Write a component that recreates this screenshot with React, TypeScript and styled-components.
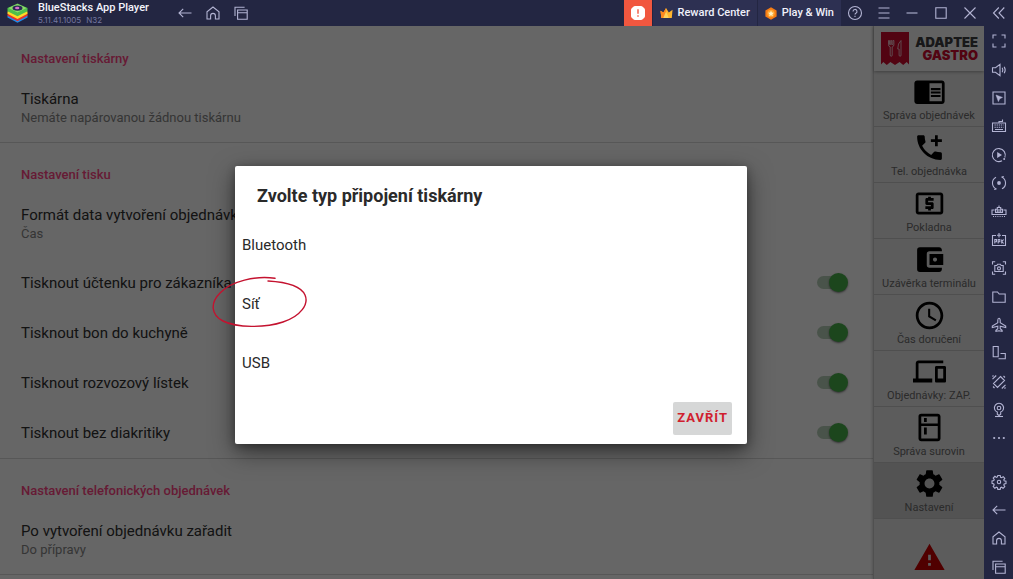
import React from 'react';
import styled, { createGlobalStyle } from 'styled-components';
import {
  MdAccessTime,
  MdAccountBalanceWallet,
  MdAddIcCall,
  MdChromeReaderMode,
  MdDevices,
  MdLocalAtm,
  MdOutlineKitchen,
  MdSettings,
  MdWarning,
} from 'react-icons/md';

const GlobalStyle = createGlobalStyle`
  *, *::before, *::after { box-sizing: border-box; }
  body { margin: 0; font-family: Roboto, "Liberation Sans", sans-serif; }
  button { font: inherit; color: inherit; border: 0; padding: 0; background: none; cursor: pointer; }
  h1, h2, p, ul { margin: 0; padding: 0; list-style: none; }
  svg { display: block; }
`;

const Player = styled.div`
  display: flex;
  flex-direction: column;
  height: 100vh;
  overflow: hidden;
  background: #232642;
`;

/* ---------- title bar ---------- */

const TitleBar = styled.header`
  display: flex;
  align-items: stretch;
  flex: none;
  height: 26px;
  color: #b3b4d3;
`;

const Brand = styled.div`
  display: flex;
  align-items: center;
  gap: 10px;
  padding-left: 7px;
`;

const BrandName = styled.h1`
  font-size: 11px;
  line-height: 14px;
  font-weight: 500;
  color: #f4f4fb;
  white-space: nowrap;
`;

const BrandVersion = styled.p`
  display: flex;
  gap: 5px;
  font-family: Inter, Roboto, sans-serif;
  font-size: 8px;
  line-height: 10px;
  color: #7578a0;
`;

const NavButtons = styled.nav`
  display: flex;
  flex: 1;
  padding-left: 22px;
`;

const NavButton = styled.button`
  display: grid;
  place-items: center;
  width: 28px;
`;

const AlertButton = styled.button`
  display: grid;
  place-items: center;
  width: 28px;
  background: #f1573f;
`;

const PromoButton = styled.button`
  display: flex;
  align-items: center;
  gap: 5px;
  margin-left: 1px;
  padding: 0 7px;
  background: #2d3052;
  color: #f0f0fa;
  font-size: 11px;
  line-height: 14px;
  font-weight: 500;
  white-space: nowrap;
`;

const WindowControls = styled.div`
  display: flex;
  flex: none;
  width: 143px;
`;

const WindowButton = styled.button`
  display: grid;
  place-items: center;
  flex: 1;
`;

const CollapseButton = styled.button`
  display: grid;
  place-items: center;
  flex: none;
  width: 29px;
`;

/* ---------- body ---------- */

const Body = styled.div`
  display: flex;
  flex: 1;
  min-height: 0;
`;

const AppArea = styled.div`
  position: relative;
  display: flex;
  flex: 1;
  min-width: 0;
  overflow: hidden;
  background: #fff;
`;

const Settings = styled.main`
  flex: 1;
  min-width: 0;
  padding-top: 1px;
  overflow: hidden;
  background: #fefefe;
`;

const Section = styled.section`
  border-bottom: 1px solid #dadada;
`;

const SectionTitle = styled.h2`
  padding: 22px 21px 4px;
  font-size: 13px;
  line-height: 20px;
  font-weight: 500;
  color: #ff4484;
`;

const Preference = styled.div`
  padding: 16px 21px;
`;

const PreferenceTitle = styled.p`
  font-size: 15px;
  line-height: 20px;
  color: #303030;
`;

const PreferenceSummary = styled.p`
  font-size: 13px;
  line-height: 17px;
  color: #868686;
`;

const SwitchRow = styled.label`
  display: flex;
  align-items: center;
  justify-content: space-between;
  height: 50px;
  padding: 0 25px 0 21px;
  font-size: 15px;
  line-height: 20px;
  color: #303030;
`;

const Switch = styled.input`
  appearance: none;
  display: grid;
  align-items: center;
  width: 31px;
  height: 20px;
  margin: 0 0 2px;

  &::before,
  &::after {
    content: '';
    grid-area: 1 / 1;
  }
  &::before {
    width: 28px;
    height: 13px;
    border-radius: 7px;
    background: #b7cfb8;
  }
  &::after {
    justify-self: end;
    width: 19px;
    height: 19px;
    border-radius: 50%;
    background: #46b04a;
    box-shadow: 0 1px 2px rgba(0, 0, 0, 0.5);
  }
`;

/* ---------- app menu ---------- */

const Menu = styled.aside`
  display: flex;
  flex-direction: column;
  flex: none;
  width: 111px;
  border-left: 1px solid #c8c8c8;
  background: #e6e6e6;
  box-shadow: 0 0 3px rgba(0, 0, 0, 0.3);
`;

const MenuLogo = styled.div`
  display: flex;
  align-items: center;
  justify-content: space-between;
  flex: none;
  height: 45px;
  padding: 0 6px 0 7px;
  background: #f6f6f6;
  box-shadow: 0 1px 3px rgba(0, 0, 0, 0.3);
`;

const LogoText = styled.div`
  display: flex;
  flex-direction: column;
  align-items: flex-end;
`;

const LogoWord = styled.span<{ $accent?: boolean }>`
  font-family: Inter, Roboto, sans-serif;
  font-size: 13px;
  line-height: 13px;
  font-weight: 900;
  color: ${(p) => (p.$accent ? '#cc0a2f' : '#3c3c40')};
`;

const MenuItem = styled.button<{ $active?: boolean }>`
  display: flex;
  flex-direction: column;
  align-items: center;
  flex: none;
  height: 56px;
  padding-top: 4px;
  border-bottom: 1px solid #c6c6c6;
  background: ${(p) => (p.$active ? '#d0d0d0' : 'transparent')};
  color: #000;
`;

const MenuLabel = styled.span`
  font-size: 11px;
  line-height: 16px;
  color: #6c6c6c;
  white-space: nowrap;
`;

const MenuAlert = styled.button`
  display: grid;
  justify-content: center;
  flex: none;
  padding-top: 22px;
  color: #c80000;
`;

/* ---------- dialog ---------- */

const Backdrop = styled.div`
  position: absolute;
  inset: 0;
  display: flex;
  align-items: center;
  justify-content: center;
  padding: 4px 2px 0 0;
  background: rgba(0, 0, 0, 0.6);
`;

const Dialog = styled.div`
  width: 512px;
  max-width: 90%;
  border-radius: 2px;
  background: #fff;
  box-shadow: 0 8px 24px rgba(0, 0, 0, 0.5), 0 2px 8px rgba(0, 0, 0, 0.3);
`;

const DialogTitle = styled.h2`
  padding: 18px 22px 8px;
  font-size: 18px;
  line-height: 24px;
  font-weight: 700;
  color: #2a2a2a;
`;

const Option = styled.button`
  position: relative;
  display: flex;
  align-items: center;
  width: 100%;
  height: 59px;
  padding: 0 7px;
  font-size: 15px;
  line-height: 20px;
  color: #2a2a2a;
`;

const HandMark = styled.svg`
  position: absolute;
  left: -24px;
  top: 0;
  overflow: visible;
`;

const DialogFooter = styled.div`
  display: flex;
  justify-content: flex-end;
  padding: 9px 15px;
`;

const CloseButton = styled.button`
  height: 33px;
  padding: 0 4px;
  border-radius: 2px;
  background: #d6d7d7;
  font-size: 13px;
  line-height: 16px;
  font-weight: 700;
  letter-spacing: 1px;
  color: #d0202e;
`;

/* ---------- tool rail ---------- */

const Rail = styled.aside`
  display: flex;
  flex-direction: column;
  gap: 15px;
  flex: none;
  width: 29px;
  margin-bottom: -2px;
  padding-top: 1px;
  color: #b3b4d3;
`;

const RailGroup = styled.div<{ $count: number }>`
  display: flex;
  flex-direction: column;
  flex: ${(p) => p.$count} 1 0;
`;

const RailButton = styled.button`
  display: grid;
  place-items: center;
  flex: 1;
  min-height: 0;
`;

/* ---------- icons ---------- */

const Line = ({ children, size = 16 }: { children: React.ReactNode; size?: number }) => (
  <svg
    width={size}
    height={size}
    viewBox="0 0 16 16"
    fill="none"
    stroke="currentColor"
    strokeWidth="1.1"
    aria-hidden="true"
  >
    {children}
  </svg>
);

const BackIcon = () => (
  <Line><path d="M14.5 8H2M6.2 3.8L2 8l4.2 4.2" /></Line>
);
const HomeIcon = () => (
  <Line><path d="M2 14V6.800L8 2l6 4.800V14h-3.600v-3.200a2.400 2.400 0 0 0-4.800 0V14z" /></Line>
);
const RecentsIcon = () => (
  <Line><path d="M4.600 5h9.600v9.200H4.600zM4.600 7.800h9.600M2 11V2.200h9.600" /></Line>
);

const rail: Array<{ name: string; icon: React.ReactNode }> = [
  { name: 'Fullscreen', icon: <path d="M2 5.500V2h3.500M10.500 2H14v3.500M14 10.500V14h-3.500M5.500 14H2v-3.500" /> },
  { name: 'Volume', icon: <path d="M1.500 5.800h3L9 2.300v11.400l-4.500-3.500h-3zM11.200 5.800q1.300 2.200 0 4.400M13.200 4.800q2 3.200 0 6.400" /> },
  {
    name: 'Lock cursor',
    icon: (
      <>
        <path d="M2 2h12v12H2z" />
        <path d="M5 5l6.500 2.400-2.800 1.300-1.300 2.900z" fill="currentColor" stroke="currentColor" strokeWidth="0.500" />
      </>
    ),
  },
  {
    name: 'Game controls',
    icon: (
      <>
        <path d="M1.500 5h13v8.500h-13zM8 5V3.500h3.500V1.500M4 11.500h8" />
        <path d="M3.500 7h9M3.500 9.200h9" strokeDasharray="1.300 0.800" />
      </>
    ),
  },
  {
    name: 'Sync operations',
    icon: (
      <>
        <path d="M11 13.700A6.500 6.500 0 1 1 13.800 10.500" />
        <path d="M6.200 5l4.800 3-4.800 3z" fill="currentColor" stroke="none" />
        <circle cx="13.200" cy="12" r="1" fill="currentColor" stroke="none" />
      </>
    ),
  },
  {
    name: 'Macro recorder',
    icon: (
      <>
        <path d="M5.500 14A6.500 6.500 0 0 1 5 2.200M10.500 2A6.500 6.500 0 0 1 11 13.800M5.500 14l-2.300.5M10.500 2l2.300-.5" />
        <circle cx="8" cy="8" r="1.900" fill="currentColor" stroke="none" />
      </>
    ),
  },
  {
    name: 'Memory trim',
    icon: (
      <>
        <path d="M3.500 7H1v4.500h14V7h-2.500M4.500 9.500V6.300H6M11.500 9.500V6.300H10M6.300 9.500V4.500h3.400v5M8 4.500V2.500M4 9.500h8M8 6v3" />
        <path d="M2 13.500h12" strokeDasharray="1 1.200" />
      </>
    ),
  },
  {
    name: 'Install app',
    icon: (
      <path d="M5 3.500H1.500v10h13v-10H11M8 1v4.500M6 3.300h4M3.800 11.500v-4h1.700v2.200H3.800M7.200 11.500v-4h1.600v2.200H7.200M10.700 7.500v4M12.700 7.500l-1.800 2 1.800 2" />
    ),
  },
  {
    name: 'Screenshot',
    icon: (
      <>
        <path d="M1.500 4.500V1.800h2.700M11.800 1.800h2.700v2.700M14.500 11.500v2.700h-2.700M4.200 14.200H1.500v-2.700M3.800 5.500h2l.8-1.200h2.800l.8 1.200h2v6H3.800z" />
        <circle cx="8" cy="8.400" r="1.500" />
      </>
    ),
  },
  { name: 'Media folder', icon: <path d="M1.800 3h4.700l1.700 2h6v8.200H1.800z" /> },
  {
    name: 'Real-time translation',
    icon: (
      <path d="M8 1.300c-.8 0-1.200 1-1.200 2v2.500L1.300 9v1.500l5.500-1.300v2.600l-1.900 1.400v1.200L8 13.700l3.100.7v-1.200l-1.900-1.400V9.200l5.500 1.300V9L9.200 5.800V3.300c0-1-.4-2-1.200-2z" />
    ),
  },
  { name: 'Rotate', icon: <path d="M2.200 1.500h5v10.300h-5zM9.500 8.500h4.800v5.300H7.500" /> },
  {
    name: 'Shake',
    icon: <path d="M9.500 2.500l4 4-7 7-4-4zM1.500 5.200l3.700-3.700M1.500 2.500l1-1M14.500 10.800l-3.700 3.700M14.500 13.500l-1 1M12.500 2l1.500 1.500M2 12.500L3.500 14" />,
  },
  {
    name: 'Location',
    icon: (
      <>
        <path d="M6.300 12.200v-2.100a4.600 4.600 0 1 1 3.400 0v2.100L8 13.500z" />
        <circle cx="8" cy="6" r="1.800" />
        <path d="M4 14.500h8" />
      </>
    ),
  },
  {
    name: 'More',
    icon: (
      <g fill="currentColor" stroke="none">
        <circle cx="3.200" cy="8" r="1.100" />
        <circle cx="8" cy="8" r="1.100" />
        <circle cx="12.800" cy="8" r="1.100" />
      </g>
    ),
  },
];

const GearLine = () => (
  <Line>
    <path d="M6.800 1.500h2.400l.4 1.800 1 .4 1.600-1 1.600 1.700-1 1.500.4 1 1.800.4v2.300l-1.800.4-.4 1 1 1.600-1.700 1.600-1.500-1-1 .4-.4 1.800H6.800l-.4-1.800-1-.4-1.600 1-1.600-1.700 1-1.500-.4-1L1 9.300V6.900l1.800-.4.4-1-1-1.500 1.700-1.700 1.500 1 1-.4z" />
    <circle cx="8" cy="8" r="1.700" />
  </Line>
);

const StackLogo = () => (
  <svg width="21" height="20" viewBox="0 0 21 20" aria-hidden="true">
    <path d="M.5 12.500L10.500 8l10 4.500v2l-10 5.200-10-5.200z" fill="#1c8ff0" />
    <path d="M.5 10.500L10.500 6l10 4.500v2.300l-10 5.400-10-5.400z" fill="#e8342e" />
    <path d="M.5 8.500L10.500 4l10 4.500v2.200l-10 5.200-10-5.200z" fill="#ffd928" />
    <path d="M.5 5L10.500.5l10 4.500v3.200l-10 5.100-10-5.100z" fill="#4fbf4a" />
    <path d="M1.500 5L10.500 1l9 4-9 4.500z" fill="#8fdc6c" />
    <ellipse cx="10.500" cy="5.100" rx="5" ry="2.700" fill="#2a2b55" />
    <ellipse cx="10.200" cy="5" rx="2.200" ry="1.300" fill="#d86fd0" />
  </svg>
);

const menu = [
  { label: 'Správa objednávek', Icon: MdChromeReaderMode },
  { label: 'Tel. objednávka', Icon: MdAddIcCall },
  { label: 'Pokladna', Icon: MdLocalAtm },
  { label: 'Uzávěrka terminálu', Icon: MdAccountBalanceWallet },
  { label: 'Čas doručení', Icon: MdAccessTime },
  { label: 'Objednávky: ZAP.', Icon: MdDevices },
  { label: 'Správa surovin', Icon: MdOutlineKitchen },
  { label: 'Nastavení', Icon: MdSettings, active: true },
];

const switches = [
  'Tisknout účtenku pro zákazníka',
  'Tisknout bon do kuchyně',
  'Tisknout rozvozový lístek',
  'Tisknout bez diakritiky',
];

export default function App() {
  return (
    <Player>
      <GlobalStyle />
      <TitleBar>
        <Brand>
          <StackLogo />
          <div>
            <BrandName>BlueStacks App Player</BrandName>
            <BrandVersion>
              <span>5.11.41.1005</span>
              <span>N32</span>
            </BrandVersion>
          </div>
        </Brand>
        <NavButtons aria-label="Android">
          <NavButton aria-label="Back"><BackIcon /></NavButton>
          <NavButton aria-label="Home"><HomeIcon /></NavButton>
          <NavButton aria-label="Recent apps"><RecentsIcon /></NavButton>
        </NavButtons>
        <AlertButton aria-label="Alerts">
          <svg width="14" height="14" viewBox="0 0 14 14" aria-hidden="true">
            <path d="M4 0h6q1 0 1.700.7l1.600 1.600Q14 3 14 4v6q0 1-.7 1.700l-1.600 1.600Q11 14 10 14H4q-1 0-1.700-.7L.7 11.700Q0 11 0 10V4q0-1 .7-1.700L2.300.7Q3 0 4 0z" fill="#fff" />
            <path d="M7 3.300v4.500M7 9.200v1.500" stroke="#f1573f" strokeWidth="1.400" />
          </svg>
        </AlertButton>
        <PromoButton>
          <svg width="13" height="12" viewBox="0 0 14 12" aria-hidden="true">
            <path d="M.5 3.500l3.200 2L6.500.5l3 5 4-3-.8 9H1.500z" fill="#ffb52e" />
            <path d="M.5 3.500l3.200 2L6.500.5v11h-5z" fill="#ff8a1f" />
            <path d="M6.500 4.500l3 7h-6z" fill="#ffd45c" />
          </svg>
          Reward Center
        </PromoButton>
        <PromoButton>
          <svg width="12" height="13" viewBox="0 0 12 13" aria-hidden="true">
            <path d="M6 .3l5.600 3.100v6.200L6 12.700.4 9.600V3.400z" fill="#f57c14" />
            <circle cx="6" cy="6.500" r="3.700" fill="#ffa52e" />
            <path d="M6 3.600l.9 1.900 2 .3-1.500 1.400.4 2L6 8.200l-1.800 1 .4-2-1.500-1.400 2-.3z" fill="#fff1c4" />
          </svg>
          Play &amp; Win
        </PromoButton>
        <WindowControls>
          <WindowButton aria-label="Help">
            <Line>
              <circle cx="8" cy="8" r="6.500" />
              <path d="M6 6.400a2 2 0 1 1 2.900 1.800c-.7.400-.9.700-.9 1.300M8 10.700v1.200" />
            </Line>
          </WindowButton>
          <WindowButton aria-label="Menu">
            <Line><path d="M2.500 3h11M2.500 8h11M2.500 13h11" /></Line>
          </WindowButton>
          <WindowButton aria-label="Minimize">
            <Line><path d="M2.500 8h11" /></Line>
          </WindowButton>
          <WindowButton aria-label="Maximize">
            <Line><path d="M2.800 2.800h10.400v10.400H2.800z" /></Line>
          </WindowButton>
          <WindowButton aria-label="Close">
            <Line><path d="M2.500 2.500l11 11M13.500 2.500l-11 11" /></Line>
          </WindowButton>
        </WindowControls>
        <CollapseButton aria-label="Collapse toolbar">
          <Line><path d="M7.800 2.500L2.500 8l5.300 5.500M13.300 2.500L8 8l5.300 5.500" /></Line>
        </CollapseButton>
      </TitleBar>

      <Body>
        <AppArea>
          <Settings>
            <Section>
              <SectionTitle>Nastavení tiskárny</SectionTitle>
              <Preference>
                <PreferenceTitle>Tiskárna</PreferenceTitle>
                <PreferenceSummary>Nemáte napárovanou žádnou tiskárnu</PreferenceSummary>
              </Preference>
            </Section>
            <Section>
              <SectionTitle>Nastavení tisku</SectionTitle>
              <Preference>
                <PreferenceTitle>Formát data vytvoření objednávky</PreferenceTitle>
                <PreferenceSummary>Čas</PreferenceSummary>
              </Preference>
              {switches.map((label) => (
                <SwitchRow key={label}>
                  {label}
                  <Switch type="checkbox" defaultChecked />
                </SwitchRow>
              ))}
            </Section>
            <Section>
              <SectionTitle>Nastavení telefonických objednávek</SectionTitle>
              <Preference>
                <PreferenceTitle>Po vytvoření objednávku zařadit</PreferenceTitle>
                <PreferenceSummary>Do přípravy</PreferenceSummary>
              </Preference>
            </Section>
          </Settings>

          <Menu>
            <MenuLogo>
              <svg width="28" height="33" viewBox="0 0 28 33" aria-hidden="true">
                <path d="M0 0h28v32.500l-2.300-2.500-3.500 3-3.600-3-4.600 3-4.600-3-3.600 3-3.500-3L0 32.500z" fill="#cc0a2f" />
                <g fill="none" stroke="#f3c9d1" strokeWidth="0.900">
                  <path d="M7.500 8.500v4.300q0 1.700 1.700 2.100V23q0 1.300 1 1.300t1-1.300v-8.100q1.700-.4 1.700-2.100V8.500h-1v4h-1.200v-4h-1v4H8.500v-4z" />
                  <path d="M20 8.500q-3.300 2.700-3.300 8.500h1.400v6q0 1.300 1 1.300t.9-1.300z" />
                </g>
              </svg>
              <LogoText>
                <LogoWord>ADAPTEE</LogoWord>
                <LogoWord $accent>GASTRO</LogoWord>
              </LogoText>
            </MenuLogo>
            {menu.map(({ label, Icon, active }) => (
              <MenuItem key={label} $active={active}>
                <Icon size={33} />
                <MenuLabel>{label}</MenuLabel>
              </MenuItem>
            ))}
            <MenuAlert aria-label="Upozornění">
              <MdWarning size={33} />
            </MenuAlert>
          </Menu>

          <Backdrop>
            <Dialog role="dialog" aria-modal="true" aria-labelledby="dialog-title">
              <DialogTitle id="dialog-title">Zvolte typ připojení tiskárny</DialogTitle>
              <Option>Bluetooth</Option>
              <Option>
                Síť
                <HandMark width="98" height="56" viewBox="0 0 98 56" fill="none" stroke="#c4122f" strokeLinecap="round" aria-hidden="true">
                  <path d="M64 3.300C45 .5 20 6 9 18-1 28 0 40 12 46c14 7 42 7 60 1 18-6 26-18 22-27C90 11 74 7 57 6" strokeWidth="1.400" />
                </HandMark>
              </Option>
              <Option>USB</Option>
              <DialogFooter>
                <CloseButton>ZAVŘÍT</CloseButton>
              </DialogFooter>
            </Dialog>
          </Backdrop>
        </AppArea>

        <Rail>
          <RailGroup $count={15}>
            {rail.map(({ name, icon }) => (
              <RailButton key={name} aria-label={name}>
                <Line>{icon}</Line>
              </RailButton>
            ))}
          </RailGroup>
          <RailGroup $count={4}>
            <RailButton aria-label="Settings"><GearLine /></RailButton>
            <RailButton aria-label="Back"><BackIcon /></RailButton>
            <RailButton aria-label="Home"><HomeIcon /></RailButton>
            <RailButton aria-label="Recent apps"><RecentsIcon /></RailButton>
          </RailGroup>
        </Rail>
      </Body>
    </Player>
  );
}
